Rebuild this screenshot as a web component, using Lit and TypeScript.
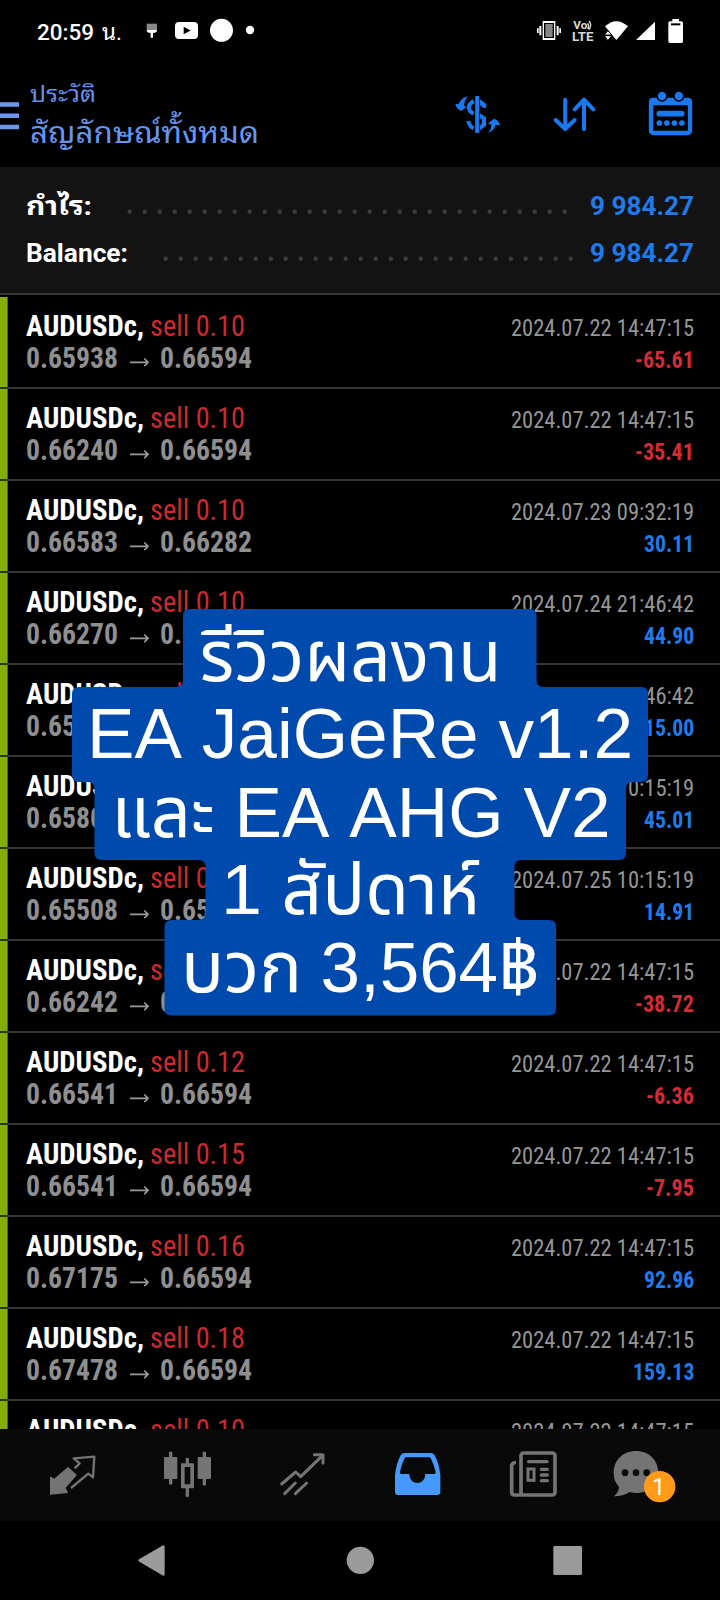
import { LitElement, html, svg, css } from "lit";
import { customElement, property } from "lit/decorators.js";

type Deal = [lot: string, from: string, to: string, time: string, profit: string];

const DEALS: Deal[] = [
  ["0.10", "0.65938", "0.66594", "2024.07.22 14:47:15", "-65.61"],
  ["0.10", "0.66240", "0.66594", "2024.07.22 14:47:15", "-35.41"],
  ["0.10", "0.66583", "0.66282", "2024.07.23 09:32:19", "30.11"],
  ["0.10", "0.66270", "0.65821", "2024.07.24 21:46:42", "44.90"],
  ["0.10", "0.65971", "0.65821", "2024.07.24 21:46:42", "15.00"],
  ["0.10", "0.65808", "0.65358", "2024.07.25 10:15:19", "45.01"],
  ["0.10", "0.65508", "0.65359", "2024.07.25 10:15:19", "14.91"],
  ["0.11", "0.66242", "0.66594", "2024.07.22 14:47:15", "-38.72"],
  ["0.12", "0.66541", "0.66594", "2024.07.22 14:47:15", "-6.36"],
  ["0.15", "0.66541", "0.66594", "2024.07.22 14:47:15", "-7.95"],
  ["0.16", "0.67175", "0.66594", "2024.07.22 14:47:15", "92.96"],
  ["0.18", "0.67478", "0.66594", "2024.07.22 14:47:15", "159.13"],
  ["0.10", "0.66240", "0.66594", "2024.07.22 14:47:15", "-35.41"],
];

/* One line of text set to a fixed width, with its baseline at a fixed height. */
const line = (text: string, width: number, height: number, base: number, cls: string) => html`
  <svg class="line ${cls}" width=${width} height=${height}>
    <text x="0" y=${base} textLength=${width} lengthAdjust="spacingAndGlyphs">${text}</text>
  </svg>`;

const profitWidth = (p: string) =>
  [...p].reduce((w, c) => w + (c === "." ? 5.9 : c === "-" ? 8.6 : 11.1), 0);

@customElement("deal-row")
class DealRow extends LitElement {
  @property({ attribute: false }) deal!: Deal;
  static styles = css`
    :host { display: block; flex: none; }
    .row { height: 92px; box-sizing: border-box; display: flex; justify-content: space-between;
      padding: 13px 26px 0 26px;
      background: linear-gradient(#2c3a12, #2c3a12) 0 90px / 7.6px 2px no-repeat,
        linear-gradient(#363636, #363636) 0 90px / 100% 2px no-repeat,
        linear-gradient(#84ae0b, #84ae0b) 0 0 / 7.6px 100% no-repeat; }
    .col { display: flex; flex-direction: column; }
    .right { align-items: flex-end; }
    .pair { display: flex; }
    .line { display: block; overflow: visible; font-family: "Roboto Condensed", Roboto, sans-serif; font-stretch: 75%; }
    .symbol { font-size: 28.8px; font-weight: 700; fill: #fff; margin-right: 6px; }
    .sell { font-size: 28.8px; font-weight: 400; fill: #cd292f; }
    .price { font-size: 29.4px; font-weight: 700; fill: #8f8f8f; }
    .arrow { margin: 0 11px 0 12px; }
    .time { font-size: 23.8px; fill: #969696; }
    .profit { font-size: 23.6px; font-weight: 700; fill: #1f7aec; }
    .loss { fill: #d62a35; }
  `;
  render() {
    const [lot, from, to, time, profit] = this.deal;
    return html`<div class="row">
      <div class="col">
        <div class="pair">${line("AUDUSDc,", 118, 32, 26, "symbol")}${line("sell " + lot, 95, 32, 26, "sell")}</div>
        <div class="pair">${line(from, 92, 32, 26, "price")}
          <svg class="arrow" width="19" height="32"><path d="M0 20.300H18M14.200 16.500L18 20.300L14.200 24.100" fill="none" stroke="#999" stroke-width="1.700"/></svg>
          ${line(to, 92, 32, 26, "price")}</div>
      </div>
      <div class="col right">
        ${line(time, 183, 32, 26, "time")}
        ${line(profit, profitWidth(profit), 32, 26, profit[0] === "-" ? "profit loss" : "profit")}
      </div>
    </div>`;
  }
}

/* Caption plate: a stepped blue outline, its lines centred on it. */
const CAPTION: [string, number, number, number][] = [
  ["รีวิวผลงาน", 199.5, 681, 302],
  ["EA JaiGeRe v1.2", 87, 758.3, 546],
  ["และ", 111.5, 836.5, 103],
  ["EA AHG V2", 234.5, 836.5, 376],
  ["1", 221, 914, 41],
  ["สัปดาห์", 281.5, 914, 198],
  ["บวก", 181, 992, 121],
  ["3,564฿", 320.5, 992, 219],
];

@customElement("app-root")
class AppRoot extends LitElement {
  static styles = css`
    :host { display: block; }
    .screen { position: relative; width: 720px; height: 1600px; background: #000; overflow: hidden;
      display: flex; flex-direction: column; font-family: Roboto, "Noto Sans Thai Looped", "Noto Looped Thai", Loma, Garuda, Waree, sans-serif; }
    .line { display: block; overflow: visible; flex: none; }
    svg { display: block; flex: none; }
    .status { height: 62px; display: flex; justify-content: space-between; align-items: flex-start; }
    .notes, .signals { display: flex; }
    .notes { padding-left: 37px; }
    .clock { font-size: 22.5px; font-weight: 500; fill: #fff; }
    .suffix { font-size: 22px; font-weight: 400; fill: #fff; margin-left: 8px; }
    .header { height: 105px; display: flex; }
    .menu { margin-right: 11px; }
    .titles { flex: 1; }
    .section { font-size: 23px; fill: #6490e8; }
    .filter { font-size: 29px; fill: #6496f0; }
    .summary { height: 128px; box-sizing: border-box; background: #131313; border-bottom: 2px solid #363636;
      padding: 23px 26px 0 26px; }
    .total { display: flex; height: 47px; justify-content: space-between; }
    .name, .value { font-weight: 700; font-size: 26px; fill: #fff; }
    .value { fill: #1f7aec; }
    .dots { flex: 1; }
    .deals { height: 1132px; box-sizing: content-box; padding-top: 2px; overflow: hidden; display: flex; flex-direction: column; }
    .tabs { height: 92px; background: #090909; }
    .nav { height: 79px; background: #000; }
    .badge { font: 400 23px Roboto, sans-serif; fill: #fff; }
    .volte { font: 700 33px Roboto, sans-serif; fill: #d8d8d8; }
    .lte { font-size: 36px; }
    .caption { position: absolute; left: 0; top: 0; }
    .words { font-family: "Liberation Sans", "Noto Sans Thai", sans-serif; font-size: 71.2px; fill: #fff; font-kerning: none; }
  `;

  render() {
    return html`<div class="screen">
      <div class="status">
        <div class="notes">
          ${line("20:59", 57, 62, 40, "clock")}${line("น.", 20, 62, 40, "suffix")}
          <svg width="136" height="62" viewBox="366 0 408 186">
            <path fill="#888" d="M440 71h31v19h-31z"/><path fill="#fff" d="M440 90h31q0 9-12 9v14h-7V99q-12 0-12-9z"/>
            <rect x="525" y="66" width="69" height="51" rx="12" fill="#fff"/><path d="M551 80L572 91.500L551 103z"/>
            <circle cx="664.500" cy="91" r="34.500" fill="#fff"/><circle cx="750" cy="90" r="12.500" fill="#fff"/>
          </svg>
        </div>
        <svg width="190" height="62" viewBox="510 0 570 186">
          <path fill="#fff" d="M548 63h38v57h-38zM538 78h6v28h-6zM531 85h5v14h-5zM590 78h6v28h-6zM598 85h5v14h-5z"/>
          <path fill="#000" d="M552 69h30v45h-30z"/><path fill="#858585" d="M556 72h22v39h-22z"/>
          <text class="volte" x="640" y="88" textLength="42" lengthAdjust="spacingAndGlyphs">Vo</text>
          <path d="M683 70q6 8 0 17M687 63q11 14-1 26" fill="none" stroke="#d8d8d8" stroke-width="4"/>
          <text class="volte lte" x="636" y="124" textLength="64" lengthAdjust="spacingAndGlyphs">LTE</text>
          <path fill="#fff" d="M735 79Q769 48 804 79L769 120z"/>
          <path fill="#fff" stroke="#000" stroke-width="3" d="M733 105L743.500 92L755 105zM733 107H755L743.500 122z"/>
          <path fill="#fff" d="M828 120L885 65V120zM937 64V57h20v7h7q5 0 5 5v55q0 5-5 5h-34q-5 0-5-5V69q0-5 5-5z"/>
          <path d="M933 70h28v6h-28z"/>
        </svg>
      </div>

      <div class="header">
        <svg class="menu" width="19" height="105"><path d="M0 42.500h19M0 53.800h19M0 65h19" stroke="#6b98ea" stroke-width="4.400"/></svg>
        <div class="titles">
          ${line("ประวัติ", 66, 44, 40, "section")}
          ${line("สัญลักษณ์ทั้งหมด", 229, 44, 37, "filter")}
        </div>
        <svg width="270" height="105" viewBox="270 186 810 315" fill="none" stroke="#1879f0" stroke-width="12">
          <path d="M351.500 288V399"/>
          <path d="M341 303Q320 316 329 332Q333 338 341 341M341 385Q328 380 325 363"/>
          <path d="M360 298L379 312L378 325L366 322L360 314zM360 340L378 352V377L360 391V378L366 369V358L360 355z" fill="#1879f0" stroke="none"/>
          <path d="M323 289Q309 292 303 300L295 313L286 311Q287 324 303 333L320 321L312 317Q313 301 323 289zM384 399Q397 393 402 386L407 374L421 376Q415 360 402 356L384 370L394 374Q394 388 384 399z" fill="#1879f0" stroke="none"/>
          <path stroke-linecap="round" stroke-linejoin="round" d="M615.500 299V387M587 360L615.500 387L644 360M672 388V300M644 328L672 299L700 328"/>
          <rect x="873" y="302" width="117" height="97" rx="7" stroke-width="13"/>
          <path d="M867 304q0-11 12-11h105q12 0 12 11v12H867z" fill="#1879f0" stroke="none"/>
          <circle cx="906" cy="288" r="15" fill="#1879f0" stroke="#000" stroke-width="5"/><circle cx="956.500" cy="288" r="15" fill="#1879f0" stroke="#000" stroke-width="5"/>
          <path stroke-width="17" stroke-linecap="round" d="M898 341H965"/>
          <path stroke-width="17" stroke-linecap="round" d="M898 369h.1M920.500 369h.1M943 369h.1M965.500 369h.1"/>
        </svg>
      </div>

      <div class="summary">
        <div class="total">${line("กำไร:", 66, 47, 24.5, "name")}
          <svg class="dots" height="47"><path d="M37.700 21.700H475" stroke="#3c3c3c" stroke-width="4.400" stroke-linecap="round" stroke-dasharray="0 15"/></svg>
          ${line("9 984.27", 104, 47, 24.5, "value")}</div>
        <div class="total">${line("Balance:", 102, 47, 24.5, "name")}
          <svg class="dots" height="47"><path d="M37.700 21.700H444" stroke="#3c3c3c" stroke-width="4.400" stroke-linecap="round" stroke-dasharray="0 15"/></svg>
          ${line("9 984.27", 104, 47, 24.5, "value")}</div>
      </div>

      <div class="deals">${DEALS.map((d) => html`<deal-row .deal=${d}></deal-row>`)}</div>

      <div class="tabs">
        <svg width="720" height="92" viewBox="0 147 2160 276" fill="none" stroke="#747474" stroke-width="7">
          <path d="M152 292L162 299L204 263L228 285L194 324L202 337L152 342z" fill="#747474" stroke-width="4" stroke-linejoin="round"/>
          <path stroke-linejoin="round" d="M224 265L239 250L221 235L283 230L279 292L265 281L213 324"/>
          <g fill="#747474" stroke="none">
            <path d="M507 217q5-5 10 0v14h12q3 0 3 3v60q0 3-3 3h-12v15q-5 5-10 0v-15h-12q-3 0-3-3v-60q0-3 3-3h12z"/>
            <path d="M608 217q5-5 10 0v14h12q3 0 3 3v60q0 3-3 3h-12v18q-5 5-10 0v-18h-12q-3 0-3-3v-60q0-3 3-3h12z"/>
            <path fill-rule="evenodd" d="M557 235q5-4 10 0v15h12q3 0 3 3v69q0 3-3 3h-12v24q-5 5-10 0v-24h-11q-3 0-3-3v-69q0-3 3-3h11zM554 261v52h17v-52z"/>
          </g>
          <path stroke-width="9" stroke-linecap="round" stroke-linejoin="round" d="M845 312L887 276L902 290L968 226M943 224H969V249M854 341L886 309M886 341L920 309"/>
          <g transform="translate(1080 0)">
            <path fill="#4599fa" stroke="none" fill-rule="evenodd" d="M134 219H212Q220 219 224 226Q237 249 241 285V336Q241 345 232 345H114Q105 345 105 336V285Q109 249 122 226Q126 219 134 219zM139 232Q135 232 133 236Q124 254 120 276Q119 282 124 282H148C149 318 195 318 196 282H223Q228 282 227 276Q222 254 213 236Q211 232 207 232z"/>
            <rect x="483" y="219" width="102" height="126" rx="8" stroke-width="11"/>
            <path stroke-width="11" stroke-linecap="round" d="M483 345H465Q455 345 455 335V258Q455 250 463 248"/>
            <path stroke-width="10" stroke-linecap="round" d="M506 245H561M544 268H562M544 285H562M544 302H562"/>
            <rect x="504" y="267" width="18" height="34" stroke-width="9"/>
            <path fill="#747474" stroke="none" d="M762 349Q777 336 777 321Q761 303 761 279C761 240 789 213 828 213S895 240 895 279C895 322 852 348 809 336Q786 350 762 349z"/>
            <g fill="#090909" stroke="none"><circle cx="795" cy="278" r="10"/><circle cx="828" cy="278" r="10"/><circle cx="860" cy="278" r="10"/></g>
            <circle cx="899" cy="320" r="47" fill="#ff9b18" stroke="none"/>
            <g transform="translate(877 345) scale(3)"><text class="badge" stroke="none">1</text></g>
          </g>
        </svg>
      </div>
      <div class="nav">
        <svg width="720" height="79" viewBox="0 423 2160 237" fill="#9b9b9b" stroke="#9b9b9b" stroke-linejoin="round" stroke-width="8">
          <path d="M419 541L490 500V583z"/><circle cx="1081" cy="541" r="37"/><rect x="1664" y="502" width="78" height="79"/>
        </svg>
      </div>

      <svg class="caption" width="720" height="1600">
        <path fill="#004aae" d="M190 609H529.500Q536.500 609 536.500 616V680Q536.500 687 543.500 687H641Q648 687 648 694V775Q648 782 641 782H633Q626 782 626 789V853Q626 860 619 860H521.500Q514.500 860 514.500 867V913Q514.500 920 521.500 920H549Q556 920 556 927V1008.500Q556 1015.500 549 1015.500H171.500Q164.500 1015.500 164.500 1008.500V927Q164.500 920 171.500 920H198.500Q205.500 920 205.500 913V867Q205.500 860 198.500 860H101.500Q94.500 860 94.500 853V789Q94.500 782 87.500 782H79Q72 782 72 775V694Q72 687 79 687H176Q183 687 183 680V616Q183 609 190 609z"/>
        ${CAPTION.map(([t, x, y, w]) => svg`<text class="words" x=${x} y=${y} textLength=${w} lengthAdjust=${/^[A-Z]/.test(t) ? "spacing" : "spacingAndGlyphs"}>${t}</text>`)}
      </svg>
    </div>`;
  }
}
